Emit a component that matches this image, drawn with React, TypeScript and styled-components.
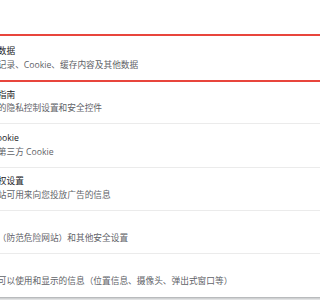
import React from "react";
import styled, { createGlobalStyle } from "styled-components";

const Global = createGlobalStyle`
  html, body {
    margin: 0;
    padding: 0;
    background: #f1f2f3;
    overflow: hidden;
  }
`;

const Page = styled.div`
  position: relative;
  width: 100vw;
  height: 100vh;
  overflow: hidden;
  background: #f1f2f3;
  font-family: "Open Sans", "Noto Sans CJK SC", sans-serif;
`;

const Card = styled.section`
  position: relative;
  margin-left: -57px;
  margin-right: -120px;
  padding-top: 36.7px;
  background: #ffffff;
  box-shadow: 0 1px 2px rgba(60, 64, 67, 0.3), 0 1px 3px 1px rgba(60, 64, 67, 0.15);
`;

const Row = styled.div<{ $first?: boolean }>`
  box-sizing: border-box;
  height: 43.33px;
  padding-left: 20px;
  display: flex;
  flex-direction: column;
  justify-content: center;
  border-top: 1px solid ${(p) => (p.$first ? "transparent" : "#ebebeb")};
`;

const Title = styled.div`
  font-size: 8.7px;
  line-height: 13.5px;
  color: #202124;
  white-space: nowrap;
`;

const Sub = styled(Title)`
  color: #5f6368;
`;

const Highlight = styled.div`
  position: absolute;
  top: 34px;
  left: 0;
  right: 0;
  height: 47.7px;
  box-sizing: border-box;
  border: 2.5px solid #e8453c;
  pointer-events: none;
`;

const rows = [
  { t: "清除浏览数据", s: "清除浏览记录、Cookie、缓存内容及其他数据" },
  { t: "隐私设置指南", s: "查看重要的隐私控制设置和安全控件" },
  { t: "第三方 Cookie", s: "阻止使用第三方 Cookie" },
  { t: "广告隐私权设置", s: "自定义网站可用来向您投放广告的信息" },
  { t: "安全", s: "安全浏览（防范危险网站）和其他安全设置" },
  { t: "网站设置", s: "控制网站可以使用和显示的信息（位置信息、摄像头、弹出式窗口等）" },
];

export default function App() {
  return (
    <Page>
      <Global />
      <Card>
        {rows.map((r, i) => (
          <Row key={r.t} $first={i === 0}>
            <Title>{r.t}</Title>
            <Sub>{r.s}</Sub>
          </Row>
        ))}
        <Highlight />
      </Card>
    </Page>
  );
}
